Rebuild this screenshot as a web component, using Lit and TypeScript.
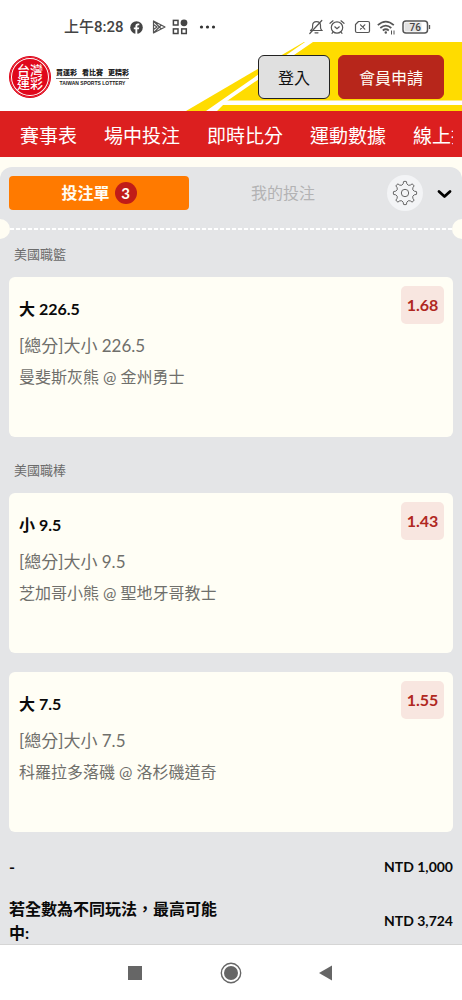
import { LitElement, html, css } from "lit";
import { customElement, property } from "lit/decorators.js";

interface Bet {
  pick: string;
  market: string;
  match: string;
  odds: string;
}

interface League {
  name: string;
  bets: Bet[];
}

const NAV = ["賽事表", "場中投注", "即時比分", "運動數據", "線上投注"];

const LEAGUES: League[] = [
  {
    name: "美國職籃",
    bets: [{ pick: "大 226.5", market: "[總分]大小 226.5", match: "曼斐斯灰熊 @ 金州勇士", odds: "1.68" }],
  },
  {
    name: "美國職棒",
    bets: [
      { pick: "小 9.5", market: "[總分]大小 9.5", match: "芝加哥小熊 @ 聖地牙哥教士", odds: "1.43" },
      { pick: "大 7.5", market: "[總分]大小 7.5", match: "科羅拉多落磯 @ 洛杉磯道奇", odds: "1.55" },
    ],
  },
];

// Outline of a rounded gear centred on the origin.
function gearPath(teeth: number, outer: number, inner: number): string {
  const step = (Math.PI * 2) / teeth;
  const at = (r: number, a: number) => `${(r * Math.sin(a)).toFixed(2)} ${(-r * Math.cos(a)).toFixed(2)}`;
  let d = "";
  for (let i = 0; i < teeth; i++) {
    const a = i * step;
    d += `${i ? "L" : "M"}${at(outer, a - step * 0.16)}`;
    d += `Q${at(outer + 0.5, a)} ${at(outer, a + step * 0.16)}`;
    d += `L${at(inner + 0.8, a + step * 0.25)}`;
    d += `Q${at(inner - 1, a + step * 0.5)} ${at(inner + 0.8, a + step * 0.75)}`;
  }
  return d + "Z";
}

@customElement("status-bar")
export class StatusBar extends LitElement {
  static styles = css`
    :host {
      display: flex;
      align-items: center;
      justify-content: space-between;
      height: 42px;
      padding: 12px 31px 0 64px;
      box-sizing: border-box;
      background: #fff;
      color: #444;
    }
    .group { display: flex; align-items: center; gap: 8px; }
    .right { gap: 6px; }
    .time { margin-right: -2px; font: 500 15px/20px Roboto, "Noto Sans CJK TC", sans-serif; white-space: nowrap; }
    svg { display: block; }
    .apps { margin-left: -3px; }
    .sim { margin-left: 3px; }
  `;

  render() {
    return html`
      <div class="group">
        <span class="time">上午8:28</span>
        <svg width="13" height="13" viewBox="0 0 13 13">
          <circle cx="6.5" cy="6.5" r="6.3" fill="#444" />
          <path d="M5.4 13V8.3H3.8V6.5h1.6V5.2c0-1.7 1-2.6 2.5-2.6h1.4v1.7H8.2c-.6 0-.9.3-.9.9v1.3h1.9l-.3 1.8H7.3V13z" fill="#fff" />
        </svg>
        <svg width="16" height="16" viewBox="0 0 16 16" fill="none" stroke="#555" stroke-width="1.2" stroke-linejoin="round">
          <path d="M2.500 2v12L14 8zM2.500 2l7.800 8M2.500 14l7.800-8M2.500 5.500 6 8l-3.500 2.500" />
        </svg>
        <svg class="apps" width="16" height="16" viewBox="0 0 16 16" fill="none" stroke="#444" stroke-width="1.5">
          <rect x="1.4" y="1.4" width="4.6" height="4.6" />
          <rect x="1.4" y="9.9" width="4.6" height="4.6" />
          <rect x="9.7" y="9.9" width="4.6" height="4.6" />
          <circle cx="12" cy="3.8" r="3.4" fill="#444" stroke="none" />
        </svg>
        <svg width="22" height="6" viewBox="0 0 22 6" fill="#333">
          <circle cx="5.5" cy="3" r="1.6" /><circle cx="11.5" cy="3" r="1.6" /><circle cx="17.5" cy="3" r="1.6" />
        </svg>
      </div>
      <div class="group right">
        <svg width="14" height="16" viewBox="0 0 14 16" fill="none" stroke="#555" stroke-width="1.2" stroke-linecap="round">
          <path d="M1.500 11.500h11.300c-1-1-1.300-2-1.300-3.300V6.600c0-2.400-1.600-4-4-4s-3.900 1.600-3.900 4v1.600c0 1.300-.6 2.300-2.100 3.300M6 13.800h3M12.800 1.500.8 14.500" />
        </svg>
        <svg width="16" height="16" viewBox="0 0 16 16" fill="none" stroke="#555" stroke-width="1.2" stroke-linecap="round">
          <circle cx="8" cy="8.5" r="5.7" />
          <path d="M1 4.300 4 1.800M15 4.300 12 1.800M5.800 7.800 8 9.800l2.300-2M4 13l-1 1.300M12 13l1 1.300" />
        </svg>
        <svg class="sim" width="17" height="14" viewBox="0 0 17 14" fill="none" stroke="#555" stroke-width="1.2" stroke-linecap="round" stroke-linejoin="round">
          <path d="M4.500 1.500H14q1.500 0 1.500 1.500v8q0 1.500-1.500 1.500H3q-1.500 0-1.500-1.500V4.500z" />
          <path d="m6.500 4.800 4.300 4.400m0-4.400L6.500 9.200" />
        </svg>
        <svg width="19" height="15" viewBox="0 0 19 15" fill="none" stroke="#555" stroke-width="1.7">
          <path d="M.8 5.200q8-7.200 16 0M3.300 8q5.500-4.800 11 0M5.800 10.500q3-2.500 6 0" />
          <circle cx="8.8" cy="12.5" r="1.2" fill="#555" stroke="none" />
          <path d="M14.500 10.500v4M17 10.500v4" stroke-width="1" />
        </svg>
        <svg width="29" height="14" viewBox="0 0 29 14">
          <rect x="1" y="1" width="24.5" height="12" rx="3" fill="#fff" stroke="#555" stroke-width="1.5" />
          <path d="M2.500 2.500h17v9h-17z" fill="#e2e2e2" />
          <path d="M27.500 5v4" stroke="#555" stroke-width="1.3" />
          <text x="13.2" y="10.7" text-anchor="middle" font-family="Roboto, sans-serif" font-size="10" font-weight="500" fill="#444">76</text>
        </svg>
      </div>
    `;
  }
}

@customElement("site-header")
export class SiteHeader extends LitElement {
  static styles = css`
    :host { display: block; font-family: Lato, "Noto Sans CJK TC", sans-serif; }
    .bar {
      position: relative;
      display: flex;
      align-items: center;
      justify-content: space-between;
      height: 69px;
      padding: 0 18px 0 9px;
      background: #fff;
    }
    .stripes { position: absolute; right: 0; top: 0; height: 100%; }
    .stripes { display: block; }
    .brand { display: flex; align-items: center; gap: 5px; color: #222; text-decoration: none; }
    .seal {
      display: flex;
      flex-direction: column;
      align-items: center;
      justify-content: center;
      width: 42px;
      height: 42px;
      box-sizing: border-box;
      border: 1px solid #e0071b;
      border-radius: 21px;
      background: #e0071b;
      box-shadow: inset 0 0 0 1px #e0071b, inset 0 0 0 2px #fff;
      color: #fff;
      font-size: 13px;
      font-weight: 500;
      line-height: 13px;
    }
    .tag { display: flex; flex-direction: column; white-space: nowrap; }
    .zh { display: flex; justify-content: space-between; font-size: 7px; font-weight: 900; line-height: 11px; border-bottom: 1px solid #777; }
    .en { font: 700 5px/8px "Liberation Sans", sans-serif; text-align: center; width: 73px; }
    .actions { position: relative; display: flex; gap: 8px; }
    button {
      height: 44px;
      padding: 0 19px;
      border: 1px solid #222;
      border-radius: 6px;
      background: #e0e0e0;
      color: #111;
      font: 400 16px/24px "Noto Sans CJK TC", sans-serif;
    }
    .join { border-color: #b7261b; background: #b7261b; color: #fffdf5; }
    .join { padding: 0 20px; }
    nav {
      display: flex;
      gap: 27px;
      height: 46px;
      align-items: center;
      box-sizing: border-box;
      padding: 3px 0 0 20px;
      border-right: 9px solid #dc1f1f;
      background: #dc1f1f;
      overflow: hidden;
    }
    nav a { flex: none; color: #fff; text-decoration: none; font-size: 19px; line-height: 28px; }
  `;

  render() {
    return html`
      <header class="bar">
        <svg class="stripes" width="276" height="69" viewBox="0 0 276 69">
          <path d="M0 69 118 0h158v69z" fill="#ffdc00" />
          <path d="M20 69 119 0h8L41 59 31 69z" fill="#fff" />
          <path d="M38 58.500h238v4.500H32z" fill="#fff" />
        </svg>
        <a class="brand" href="#">
          <span class="seal"><span>台灣</span><span>運彩</span></span>
          <span class="tag">
            <span class="zh"><span>買運彩</span><span>看比賽</span><span>更精彩</span></span>
            <span class="en">TAIWAN SPORTS LOTTERY</span>
          </span>
        </a>
        <div class="actions">
          <button type="button">登入</button>
          <button type="button" class="join">會員申請</button>
        </div>
      </header>
      <nav>${NAV.map((n) => html`<a href="#">${n}</a>`)}</nav>
    `;
  }
}

@customElement("bet-card")
export class BetCard extends LitElement {
  @property({ attribute: false }) bet!: Bet;

  static styles = css`
    :host {
      display: flex;
      justify-content: space-between;
      align-items: flex-start;
      min-height: 160px;
      padding: 9px 9px 9px 10px;
      box-sizing: border-box;
      border-radius: 6px;
      background: #fffef5;
    }
    h3 { margin: 7px 0 0; font-size: 16px; line-height: 31px; font-weight: 700; color: #0a0a0a; }
    p { margin: 0; font-size: 16px; line-height: 31px; font-weight: 400; color: #6f6f6b; }
    .market { padding-top: 6px; font-size: 17px; }
    .odds {
      min-width: 43px;
      border-radius: 5px;
      background: #f8e6e0;
      color: #b0281f;
      font-size: 16px;
      line-height: 38px;
      font-weight: 700;
      text-align: center;
    }
  `;

  render() {
    return html`
      <div>
        <h3>${this.bet.pick}</h3>
        <p class="market">${this.bet.market}</p>
        <p>${this.bet.match}</p>
      </div>
      <span class="odds">${this.bet.odds}</span>
    `;
  }
}

@customElement("app-root")
export class AppRoot extends LitElement {
  static styles = css`
    :host {
      display: flex;
      flex-direction: column;
      height: 100vh;
      overflow: hidden;
      background: #fffdf3;
      font-family: Lato, "Noto Sans CJK TC", sans-serif;
    }
    status-bar, site-header { flex: none; }
    .slip {
      flex: 1;
      min-height: 0;
      overflow: hidden;
      margin-top: 10px;
      border-radius: 12px 12px 0 0;
      background: #e4e5e7;
    }
    .tabs { display: flex; align-items: center; padding: 9px 9px 0; }
    .tab {
      flex: 1;
      height: 34px;
      display: flex;
      align-items: center;
      justify-content: center;
      gap: 5px;
      padding: 0;
      border: 0;
      border-radius: 4px;
      background: none;
      color: #b3b3b4;
      font: 400 16px/24px Lato, "Noto Sans CJK TC", sans-serif;
    }
    .active { margin-right: 4px; background: #ff7a00; color: #fffdf3; font-weight: 700; }
    .count { width: 22px; border-radius: 11px; background: #c01c18; font-size: 15px; line-height: 22px; font-weight: 700; }
    .icon { display: block; padding: 0; border: 0; background: none; }
    .gear { width: 36px; height: 36px; margin: -1px 12px -1px 14px; border-radius: 18px; background: #f3f4f6; }
    .icon svg { display: block; margin: auto; }
    .perforation { display: flex; align-items: center; height: 20px; margin: 9px -10px 5px; }
    .perforation::before, .perforation::after {
      content: "";
      flex: none;
      width: 20px;
      height: 20px;
      border-radius: 10px;
      background: #fffdf3;
    }
    .dashes { flex: 1; height: 2px; background: repeating-linear-gradient(90deg, #fff 0 4px, transparent 4px 6px); }
    .league { margin: 0 9px; }
    .league + .league { margin-top: 23px; }
    h2 { margin: 0 0 13px; padding-left: 5px; font-size: 13px; line-height: 20px; font-weight: 400; color: #6b6b6b; }
    .cards { display: flex; flex-direction: column; gap: 19px; }
    dl { margin: 0; padding: 23px 9px 0; color: #0a0a0a; font-weight: 700; }
    .row { display: flex; justify-content: space-between; align-items: center; gap: 16px; }
    .row + .row { margin-top: 18px; }
    dt { width: 50%; font-size: 16px; line-height: 24px; }
    dd { margin: 0; font-size: 14px; line-height: 24px; }
    .system {
      flex: none;
      display: flex;
      align-items: center;
      justify-content: center;
      gap: 75px;
      height: 55px;
      border-top: 1px solid #d5d5d5;
      background: #fff;
    }
  `;

  render() {
    return html`
      <status-bar></status-bar>
      <site-header></site-header>
      <main class="slip">
        <div class="tabs">
          <button type="button" class="tab active">投注單<span class="count">3</span></button>
          <button type="button" class="tab">我的投注</button>
          <button type="button" class="icon gear" aria-label="設定">
            <svg width="26" height="26" viewBox="-13 -13 26 26" fill="none" stroke="#666" stroke-width="1">
              <path d=${gearPath(8, 11.5, 8.6)} stroke-linejoin="round" />
              <circle r="3.7" />
            </svg>
          </button>
          <button type="button" class="icon" aria-label="收合">
            <svg width="18" height="18" viewBox="0 0 18 18" fill="none" stroke="#000" stroke-width="2.8" stroke-linecap="round" stroke-linejoin="round">
              <path d="m4 7.500 5.500 5 5.500-5" />
            </svg>
          </button>
        </div>
        <div class="perforation"><span class="dashes"></span></div>
        ${LEAGUES.map(
          (l) => html`
            <section class="league">
              <h2>${l.name}</h2>
              <div class="cards">${l.bets.map((b) => html`<bet-card .bet=${b}></bet-card>`)}</div>
            </section>
          `,
        )}
        <dl>
          <div class="row"><dt>-</dt><dd>NTD 1,000</dd></div>
          <div class="row"><dt>若全數為不同玩法，最高可能中:</dt><dd>NTD 3,724</dd></div>
        </dl>
      </main>
      <footer class="system">
        <button type="button" class="icon" aria-label="最近">
          <svg width="20" height="22" viewBox="0 0 20 22"><path d="M3 4h14v14H3z" fill="#666" /></svg>
        </button>
        <button type="button" class="icon" aria-label="主畫面">
          <svg width="22" height="22" viewBox="0 0 22 22">
            <circle cx="11" cy="11" r="9.7" fill="none" stroke="#666" stroke-width="1.4" />
            <circle cx="11" cy="11" r="7" fill="#666" />
          </svg>
        </button>
        <button type="button" class="icon" aria-label="返回">
          <svg width="20" height="22" viewBox="0 0 20 22"><path d="M15 3.500v15L2 11z" fill="#666" /></svg>
        </button>
      </footer>
    `;
  }
}
